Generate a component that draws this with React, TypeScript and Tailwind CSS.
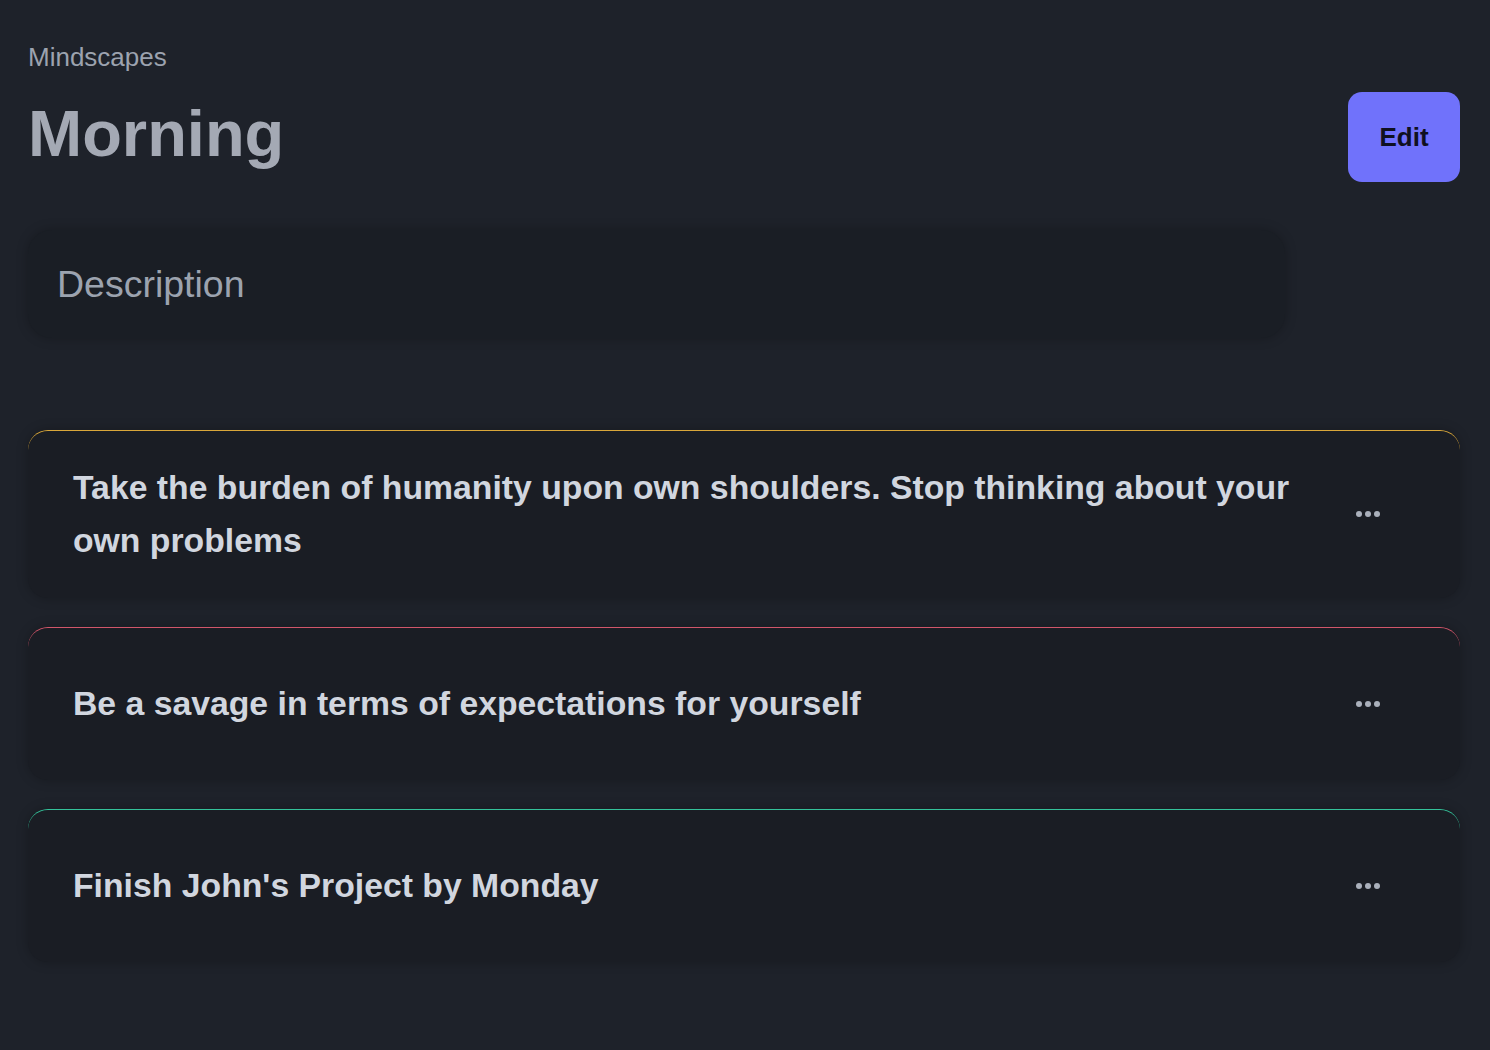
import { useState } from 'react'

const goals = [
  {
    text: 'Take the burden of humanity upon own shoulders. Stop thinking about your own problems',
    accent: 'border-t-[#d9a73a]',
  },
  {
    text: 'Be a savage in terms of expectations for yourself',
    accent: 'border-t-[#d2566a]',
  },
  {
    text: "Finish John's Project by Monday",
    accent: 'border-t-[#34c29a]',
  },
]

function Dots() {
  return (
    <svg width="26" height="8" viewBox="0 0 26 8" fill="#aab0bb">
      <circle cx="4" cy="4" r="3" />
      <circle cx="13" cy="4" r="3" />
      <circle cx="22" cy="4" r="3" />
    </svg>
  )
}

export default function App() {
  const [description, setDescription] = useState('')

  return (
    <div
      className="min-h-screen bg-[#1e222a] pl-[28px] pr-[30px] pt-[42px] pb-20"
      style={{ fontFamily: '"Liberation Sans", Arial, sans-serif' }}
    >
      <div className="flex items-start justify-between">
        <div>
          <p className="text-[26px] leading-[30px] text-[#9ca3af]">Mindscapes</p>
          <h1 className="mt-[25px] text-[65px] leading-[74px] font-bold text-[#a4a9b4]">Morning</h1>
        </div>
        <button className="mt-[50px] h-[90px] w-[112px] rounded-[14px] bg-[#7072fb] text-[26px] font-bold text-[#0f1020]">
          Edit
        </button>
      </div>

      <div className="mt-[48px] w-[1257px] rounded-[24px] bg-[#1a1e25] shadow-[0_0_12px_rgba(0,0,0,0.25)]">
        <input
          value={description}
          onChange={(e) => setDescription(e.target.value)}
          placeholder="Description"
          className="h-[108px] w-full bg-transparent px-[29px] text-[37.5px] text-[#a4a9b4] outline-none placeholder:text-[#9ca3af]"
        />
      </div>

      <div className="mt-[92px] flex flex-col gap-[29px]">
        {goals.map((goal, index) => (
          <div
            key={index}
            className={`flex min-h-[153px] items-center justify-between rounded-[20px] border-t border-solid ${goal.accent} bg-[#1a1d24] pt-[30px] pb-[31px] pl-[45px] pr-[79px] shadow-[0_0_12px_rgba(0,0,0,0.25)]`}
          >
            <p className="max-w-[1240px] text-[33.75px] leading-[53px] font-bold text-[#d1d6df]">{goal.text}</p>
            <button className="flex items-center justify-center">
              <Dots />
            </button>
          </div>
        ))}
      </div>
    </div>
  )
}
